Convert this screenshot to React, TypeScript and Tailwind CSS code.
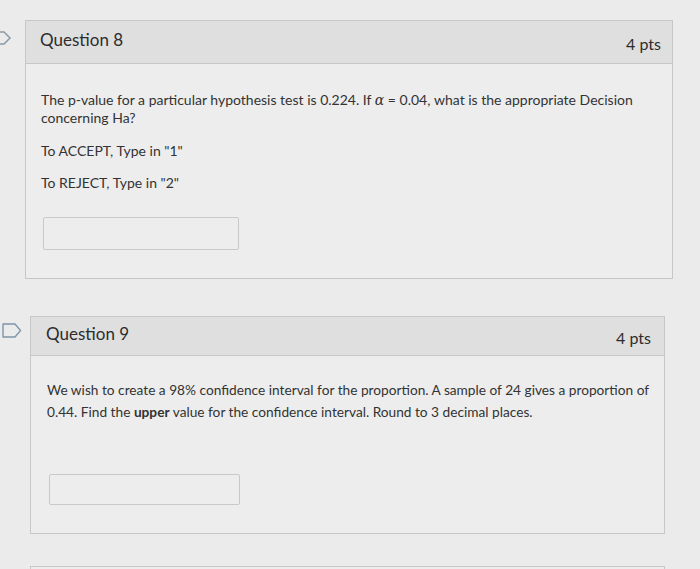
export default function App() {
  const font = { fontFamily: "Lato, 'Noto Sans', sans-serif" };
  return (
    <div className="w-[700px] h-[569px] bg-[#ebebeb] overflow-hidden text-[#2d3b45] pt-[20px]" style={font}>
      {/* Question 8 */}
      <div className="relative ml-[25px] w-[648px] h-[259px] border border-[#c7c7c7] bg-[#ededed]">
        <div className="absolute left-[-38px] top-[10px]">
          <svg width="24" height="14" viewBox="0 0 24 14">
            <path d="M1 1 H16 L22 7 L16 13 H1" fill="none" stroke="#8a9aa6" strokeWidth="1.5" />
          </svg>
        </div>
        <div className="h-[43px] bg-[#dfdfdf] border-b border-[#c7c7c7] flex items-start justify-between pl-[14px] pr-[11px]">
          <div className="text-[17px] mt-[6px] text-[#2d2d2d]">Question 8</div>
          <div className="text-[16px] mt-[11px] text-[#2d2d2d]">4 pts</div>
        </div>
        <div className="pl-[15px] pr-[20px] pt-[27px] text-[14px] leading-[18px] text-[#333]">
          <p>
            The p-value for a particular hypothesis test is 0.224. If{" "}
            <span className="italic" style={{ fontFamily: "'DejaVu Serif', serif" }}>α</span> = 0.04, what is the appropriate Decision concerning Ha?
          </p>
          <p className="mt-[15px]">To ACCEPT, Type in "1"</p>
          <p className="mt-[14px]">To REJECT, Type in "2"</p>
          <div className="mt-[25px] ml-[2px] w-[196px] h-[33px] border border-[#c9c9c9] rounded-[2px] bg-[#ededed]" />
        </div>
      </div>

      {/* Question 9 */}
      <div className="relative ml-[30px] mt-[37px] w-[635px] h-[218px] border border-[#c7c7c7] bg-[#ededed]">
        <div className="absolute left-[-29px] top-[6px]">
          <svg width="20" height="15" viewBox="0 0 20 15">
            <path d="M1 1 H13 L18.5 7.5 L13 14 H1 Z" fill="none" stroke="#7e95aa" strokeWidth="1.4" strokeLinejoin="round" />
          </svg>
        </div>
        <div className="h-[39px] bg-[#dfdfdf] border-b border-[#c7c7c7] flex items-start justify-between pl-[15px] pr-[13px]">
          <div className="text-[17px] mt-[4px] text-[#2d2d2d]">Question 9</div>
          <div className="text-[16px] mt-[9px] text-[#2d2d2d]">4 pts</div>
        </div>
        <div className="pl-[16px] pr-[4px] pt-[23px] text-[13.7px] leading-[22px] text-[#333]">
          <p>
            We wish to create a 98% confidence interval for the proportion. A sample of 24 gives a proportion of 0.44. Find the{" "}
            <span className="font-bold">upper</span> value for the confidence interval. Round to 3 decimal places.
          </p>
          <div className="mt-[51px] ml-[2px] w-[191px] h-[31px] border border-[#c9c9c9] rounded-[2px] bg-[#ededed]" />
        </div>
      </div>

      {/* Next card top */}
      <div className="ml-[30px] mt-[32px] w-[635px] h-[20px] border-t border-l border-r border-[#c7c7c7] bg-[#ededed]" />
    </div>
  );
}
